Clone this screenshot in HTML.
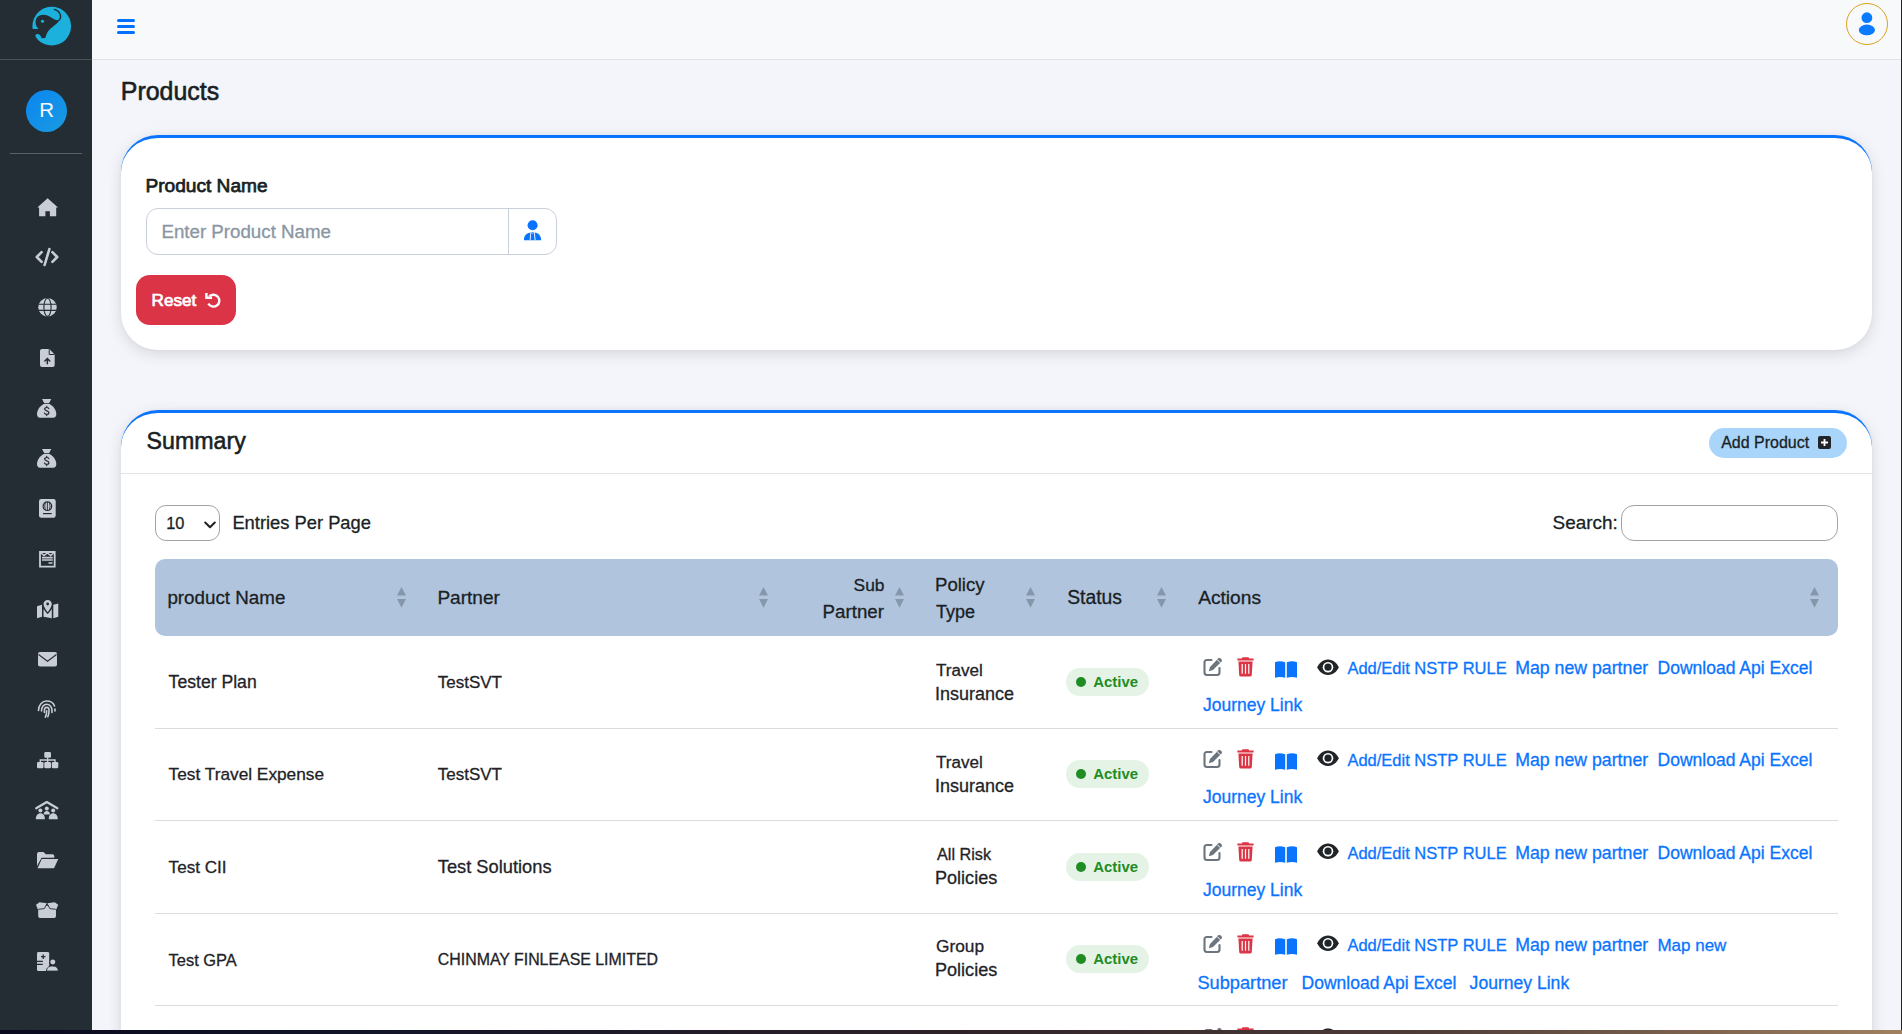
<!DOCTYPE html>
<html><head><meta charset="utf-8">
<style>
*{box-sizing:border-box;margin:0;padding:0}
html,body{width:1902px;height:1034px;overflow:hidden}
body{font-family:"Liberation Sans",sans-serif;background:#f4f5fa;color:#1f2328;position:relative}
.sb{position:absolute;left:0;top:0;width:92px;height:1030px;background:#232d33}
.sb .hr1{position:absolute;left:0;top:59px;width:92px;height:1px;background:#4a5258}
.sb .hr2{position:absolute;left:10px;top:153px;width:72px;height:1px;background:#5a6268}
.av{position:absolute;left:26px;top:90px;width:41px;height:42px;border-radius:50%;background:linear-gradient(135deg,#0b86f0,#1a9ae0);color:#f4f9ff;font-size:20.5px;text-align:center;line-height:40px;text-indent:0.5px}
.si{position:absolute;fill:#c9cdd6;overflow:visible}
.hd{position:absolute;left:92px;top:0;width:1810px;height:60px;background:#f8f9fb;border-bottom:1px solid #dfe1e6}
.rb{position:absolute;left:1901px;top:0;width:1px;height:1030px;background:#222}
.bb{position:absolute;left:0;top:1030px;width:1902px;height:4px;background:linear-gradient(90deg,#0a0a1e 0%,#121428 20%,#2e2228 50%,#4e3c38 75%,#a08060 100%)}
.card{position:absolute;left:121px;background:#fff;border-top:3px solid #0a74ff;border-radius:37px;box-shadow:0 4px 15px rgba(0,0,0,.12),0 0 4px rgba(0,0,0,.03)}
.ham{position:absolute;left:117px;top:18.9px;width:18px;height:15px}
.ham i{position:absolute;left:0;width:18px;height:2.9px;border-radius:1.5px;background:#0070ff}
.uc{position:absolute;left:1845.5px;top:2.5px;width:42.5px;height:42.5px;border-radius:50%;border:1.6px solid #d9a41e}
.ig{position:absolute;left:146px;top:208px;width:411px;height:47px;border:1px solid #c9d0d9;border-radius:12px;background:#fff}
.ig .dv{position:absolute;left:361px;top:0;width:1px;height:45px;background:#c9d0d9}
.rst{position:absolute;left:136px;top:275px;width:100px;height:50px;border-radius:14px;background:#db3446}
.t{position:absolute;white-space:nowrap;line-height:20px;-webkit-text-stroke:0.3px currentColor}
.ap{position:absolute;left:1709px;top:428px;width:138px;height:30px;border-radius:15px;background:#a9d5fb}
.dvd{position:absolute;left:121px;top:473px;width:1751px;height:1px;background:#e2e4e8}
.sel{position:absolute;left:155px;top:505px;width:65px;height:36px;border:1px solid #a3a3a3;border-radius:11px;background:#fff}
.srch{position:absolute;left:1621px;top:505px;width:217px;height:36px;border:1px solid #a3a3a3;border-radius:13px;background:#fff}
.th{position:absolute;left:155px;top:559px;width:1683px;height:77px;border-radius:10px;background:#b0c4de}
.srt{position:absolute;width:9px;height:21px}
.rl{position:absolute;left:155px;width:1683px;height:1.2px;background:#dcdcdc}
.bdg{position:absolute;left:1066px;width:83px;height:28px;border-radius:14px;background:#e5f3e7}
.bdg i{position:absolute;left:10px;top:9px;width:10px;height:10px;border-radius:50%;background:#1f8c24}
.ic{position:absolute}
</style></head>
<body>
<div class="sb">
  <svg style="position:absolute;left:26px;top:0" width="50" height="50" viewBox="0 0 1034 1034"><circle cx="532" cy="542" r="400" fill="#1cb0dd"/><path fill="#232d33" d="M262,600 C195,545 172,425 238,348 C320,272 440,300 530,368 C600,418 655,432 700,400 C660,495 530,560 462,640 C425,688 410,750 400,785 L322,790 C310,735 275,700 235,702 C200,705 185,735 195,765 L110,720 L120,600 Z"/><path d="M690,410 C750,330 700,225 585,195" fill="none" stroke="#232d33" stroke-width="28" stroke-linecap="round"/><circle cx="342" cy="440" r="33" fill="#1cb0dd"/></svg>
  <div class="hr1"></div>
  <div class="av">R</div>
  <div class="hr2"></div>

<svg class="si" style="left:36.6px;top:197.8px" width="21.3" height="18.5" viewBox="0 0 21.3 18.5"><path d="M0.3,9.6 L10.65,0.3 L21,9.6 L19.2,9.6 L19.2,18.3 L12.9,18.3 L12.9,13.2 L8.4,13.2 L8.4,18.3 L2.1,18.3 L2.1,9.6 Z"/></svg>
<svg class="si" style="left:35.3px;top:247.9px" width="24" height="18" viewBox="0 0 24 18"><path d="M6.6,4.2 L1.8,9 L6.6,13.8 M17.4,4.2 L22.2,9 L17.4,13.8 M14.4,1 L9.6,17" fill="none" stroke="#c9cdd6" stroke-width="2.6" stroke-linecap="round" stroke-linejoin="round"/></svg>
<svg class="si" style="left:37.8px;top:297.8px" width="19" height="18.6" viewBox="0 0 19 18.6"><circle cx="9.5" cy="9.3" r="9.2"/><path d="M0.5,6.3 H18.5 M0.5,12.4 H18.5" stroke="#232d33" stroke-width="1.1"/><ellipse cx="9.5" cy="9.3" rx="3.6" ry="9.1" fill="none" stroke="#232d33" stroke-width="1.1"/></svg>
<svg class="si" style="left:39.7px;top:349px" width="14.7" height="18" viewBox="0 0 14.7 18"><path d="M2,0 L9.3,0 L14.7,5.4 L14.7,16 Q14.7,18 12.7,18 L2,18 Q0,18 0,16 L0,2 Q0,0 2,0 Z"/><path d="M9.2,0.2 V5.5 H14.5" fill="none" stroke="#232d33" stroke-width="1"/><path d="M7.35,14.8 V9.6 M4.9,12 L7.35,9.5 L9.8,12" fill="none" stroke="#232d33" stroke-width="1.5" stroke-linecap="round" stroke-linejoin="round"/></svg>
<svg class="si" style="left:37.4px;top:398.8px" width="19.3" height="18.8" viewBox="0 0 19.3 18.8"><path d="M5,0 L14.3,0 L12,4.2 L7.3,4.2 Z"/><path d="M6.8,4.9 L12.5,4.9 C16,6.8 19.3,10.5 19.3,15 C19.3,17.4 18.2,18.8 16.2,18.8 L3.1,18.8 C1.1,18.8 0,17.4 0,15 C0,10.5 3.3,6.8 6.8,4.9 Z"/><path d="M11.8,9.6 C11.4,8.8 10.6,8.5 9.7,8.5 C8.5,8.5 7.6,9.1 7.6,10.1 C7.6,11.2 8.6,11.5 9.7,11.8 C10.9,12.1 11.9,12.5 11.9,13.7 C11.9,14.8 10.9,15.3 9.7,15.3 C8.7,15.3 7.8,14.9 7.4,14.1 M9.7,7.3 V8.5 M9.7,15.3 V16.6" fill="none" stroke="#232d33" stroke-width="1.2" stroke-linecap="round"/></svg>
<svg class="si" style="left:37.4px;top:448.8px" width="19.3" height="18.8" viewBox="0 0 19.3 18.8"><path d="M5,0 L14.3,0 L12,4.2 L7.3,4.2 Z"/><path d="M6.8,4.9 L12.5,4.9 C16,6.8 19.3,10.5 19.3,15 C19.3,17.4 18.2,18.8 16.2,18.8 L3.1,18.8 C1.1,18.8 0,17.4 0,15 C0,10.5 3.3,6.8 6.8,4.9 Z"/><path d="M11.8,9.6 C11.4,8.8 10.6,8.5 9.7,8.5 C8.5,8.5 7.6,9.1 7.6,10.1 C7.6,11.2 8.6,11.5 9.7,11.8 C10.9,12.1 11.9,12.5 11.9,13.7 C11.9,14.8 10.9,15.3 9.7,15.3 C8.7,15.3 7.8,14.9 7.4,14.1 M9.7,7.3 V8.5 M9.7,15.3 V16.6" fill="none" stroke="#232d33" stroke-width="1.2" stroke-linecap="round"/></svg>
<svg class="si" style="left:38.9px;top:498.8px" width="16.7" height="18.8" viewBox="0 0 16.7 18.8"><rect x="0" y="0" width="16.7" height="18.8" rx="2.2"/><circle cx="8.4" cy="7.2" r="4.3" fill="none" stroke="#232d33" stroke-width="1.2"/><path d="M8.4,2.9 V11.5 M6.3,3.4 Q5.2,7.2 6.3,11 M10.5,3.4 Q11.6,7.2 10.5,11" fill="none" stroke="#232d33" stroke-width="0.9"/><path d="M4,14.6 H12.7" stroke="#232d33" stroke-width="1.2"/></svg>
<svg class="si" style="left:38.9px;top:550.9px" width="16.7" height="16.7" viewBox="0 0 16.7 16.7"><path d="M1,1 H15.7 V15.7 H1 Z" fill="none" stroke="#c9cdd6" stroke-width="1.8"/><path d="M1.5,1.5 L5,4.5 L8.3,2 L11.7,4.5 L15.2,1.5" fill="none" stroke="#c9cdd6" stroke-width="1.5"/><path d="M3,6.6 H13.7 M3,9 H13.7 M9.5,12 H13.5" stroke="#c9cdd6" stroke-width="1.6"/></svg>
<svg class="si" style="left:36.6px;top:599.8px" width="21.3" height="18.2" viewBox="0 0 21.3 18.2"><path d="M0,6.2 L5,4.8 L5,16.8 L0,18.2 Z M16.3,4.8 L21.3,3.4 L21.3,16.8 L16.3,18.2 Z M6.5,9 L9.5,13 L10.65,14 L11.8,13 L14.8,9 L14.8,18.2 L6.5,16.8 Z"/><path d="M10.65,0 C13,0 14.8,1.8 14.8,4 C14.8,7 10.65,12.3 10.65,12.3 C10.65,12.3 6.5,7 6.5,4 C6.5,1.8 8.3,0 10.65,0 Z"/><circle cx="10.65" cy="4" r="1.4" fill="#232d33"/></svg>
<svg class="si" style="left:37.8px;top:652px" width="19" height="14.4" viewBox="0 0 19 14.4"><rect x="0" y="0" width="19" height="14.4" rx="2"/><path d="M0.5,2.5 L9.5,9.3 L18.5,2.5" fill="none" stroke="#232d33" stroke-width="1.1"/></svg>
<svg class="si" style="left:37.4px;top:699.8px" width="19.3" height="18.2" viewBox="0 0 19.3 18.2"><g fill="none" stroke="#c9cdd6" stroke-width="1.6" stroke-linecap="round"><path d="M1.5,10.5 C1.5,5 5.2,1 9.7,1 C13.5,1 16.5,3.2 17.5,6"/><path d="M18,9 V11"/><path d="M4.5,11 C4.5,7 6.8,4.2 9.7,4.2 C12.5,4.2 15,6.8 15,10.5 V12.5"/><path d="M7.4,12.5 V10.5 C7.4,8.8 8.4,7.4 9.7,7.4 C11.2,7.4 12.1,8.6 12.1,10.5 C12.1,13 11.6,15 10.8,16.8"/><path d="M9.7,10.8 C9.7,13.5 9.3,15.8 8.3,17.2"/></g></svg>
<svg class="si" style="left:36.6px;top:752px" width="21.3" height="16.3" viewBox="0 0 21.3 16.3"><rect x="7.3" y="0" width="6.7" height="5.8" rx="1.3"/><path d="M10.65,5.5 V10.2 M3.3,10.2 V8 H18 V10.2" fill="none" stroke="#c9cdd6" stroke-width="1.4"/><rect x="0" y="10" width="6.5" height="6.3" rx="1.3"/><rect x="7.3" y="10" width="6.7" height="6.3" rx="1.3"/><rect x="14.8" y="10" width="6.5" height="6.3" rx="1.3"/></svg>
<svg class="si" style="left:35.4px;top:800.9px" width="23.6" height="18.2" viewBox="0 0 23.6 18.2"><path d="M1.2,7.3 L11.8,1 L22.4,7.3" fill="none" stroke="#c9cdd6" stroke-width="2.2" stroke-linecap="round" stroke-linejoin="round"/><circle cx="11.8" cy="7.5" r="2"/><circle cx="5.4" cy="9.6" r="2"/><circle cx="18.2" cy="9.6" r="2"/><path d="M8.6,13.5 C8.6,11.2 10,10 11.8,10 C13.6,10 15,11.2 15,13.5 Z"/><path d="M0.8,18.2 C0.8,14.5 2.8,12.3 5.4,12.3 C7.6,12.3 9.4,14.2 9.8,16.5 L9.8,18.2 Z"/><path d="M13.8,18.2 L13.8,16.5 C14.2,14.2 16,12.3 18.2,12.3 C20.8,12.3 22.8,14.5 22.8,18.2 Z"/></svg>
<svg class="si" style="left:36.6px;top:852px" width="21.3" height="16.3" viewBox="0 0 21.3 16.3"><path d="M0,2 Q0,0 2,0 L6.5,0 L8.8,2.2 L15.5,2.2 Q17.3,2.2 17.3,4 L17.3,5.8 L4.6,5.8 L0,14 Z"/><path d="M4.8,7 L21.3,7 L17,16.3 L0.5,16.3 Z"/></svg>
<svg class="si" style="left:36.1px;top:902px" width="22.2" height="16.1" viewBox="0 0 22.2 16.1"><path d="M2.2,7.5 L11.1,3.5 L20,7.5 L20,13.5 Q20,16.1 17.5,16.1 L4.7,16.1 Q2.2,16.1 2.2,13.5 Z"/><path d="M0,2.8 L3.5,0.3 L11.1,1.2 L8.3,6.6 L1.8,7.2 Z"/><path d="M22.2,2.8 L18.7,0.3 L11.1,1.2 L13.9,6.6 L20.4,7.2 Z"/><path d="M2.5,7.3 L8.3,6.6 L11.1,1.5 L13.9,6.6 L19.7,7.3" fill="none" stroke="#232d33" stroke-width="0.9"/></svg>
<svg class="si" style="left:36.5px;top:951.6px" width="21.3" height="19.1" viewBox="0 0 21.3 19.1"><rect x="0" y="0" width="12.2" height="19.1" rx="1.5"/><path d="M6.2,2.5 V7 M4,4.7 H8.4" stroke="#232d33" stroke-width="1.3"/><path d="M0,9.3 H5.8 M0,12.3 H5.8" stroke="#232d33" stroke-width="1.2"/><circle cx="15.8" cy="10" r="3.3" fill="#232d33"/><circle cx="15.8" cy="10" r="2.5"/><path d="M9.5,19.1 C9.5,15.5 12,14 15.8,14 C19.4,14 21.3,15.8 21.3,19.1 Z" stroke="#232d33" stroke-width="0.9"/></svg>
</div>
<div class="hd"></div>
<div class="ham"><i style="top:0"></i><i style="top:6.1px"></i><i style="top:12.2px"></i></div>
<div class="uc"></div>
<svg style="position:absolute;left:1855px;top:10px" width="24" height="28" viewBox="0 0 24 28"><circle cx="11.9" cy="7.7" r="5.4" fill="#0a7bff"/><ellipse cx="11.9" cy="19.9" rx="8.1" ry="5.3" fill="#0a7bff"/></svg>
<div class="card" style="top:135px;width:1751px;height:215px"></div>
<div class="ig"><div class="dv"></div><svg style="position:absolute;left:377px;top:11px" width="18" height="21" viewBox="0 0 18 21"><circle cx="8.6" cy="5.3" r="5.05" fill="#0a74ff"/><path d="M-0.3,20.3 C-0.3,15.6 2.8,12.6 6.8,12.4 L10.4,12.4 C14.4,12.6 17.2,15.6 17.2,20.3 Z" fill="#0a74ff"/><path d="M6.9,12.3 L6.1,20 M10.3,12.3 L11.1,20" stroke="#fff" stroke-width="0.9"/><path d="M7.4,11.9 H9.8 L9.4,13.4 H7.8 Z" fill="#fff"/><path d="M7.5,12.2 H9.7 L9.3,13.2 H7.9 Z" fill="#0a74ff"/></svg></div>
<div class="rst"><svg style="position:absolute;left:69px;top:17.5px" width="16" height="16" viewBox="0 0 16 16"><path d="M3.3,10.7 A5.95,5.95 0 1 0 4.3,3.4" fill="none" stroke="#fff" stroke-width="2.3"/><path d="M0.2,-0.1 L2.6,-0.1 L2.6,3.6 L7.1,3.6 L7.1,6 L0.2,6 Z" fill="#fff"/></svg></div>
<div class="card" style="top:409.5px;width:1751px;height:700px"></div>
<div class="ap"><svg style="position:absolute;left:109px;top:8px" width="13" height="13" viewBox="0 0 13 13"><rect width="13" height="13" rx="2" fill="#212529"/><path d="M6.5,3 V10 M3,6.5 H10" stroke="#fff" stroke-width="1.8"/></svg></div>
<div class="dvd"></div>
<div class="sel"><svg style="position:absolute;left:47.5px;top:14.5px" width="12" height="8" viewBox="0 0 12 8"><path d="M1.2,1.5 L6,6.2 L10.8,1.5" fill="none" stroke="#222" stroke-width="2" stroke-linecap="round" stroke-linejoin="round"/></svg></div>
<div class="srch"></div>
<div class="th"></div>
<div class="srt" style="left:396.75px;top:587px"><svg width="9" height="21" viewBox="0 0 9 21"><path d="M4.5,0 L9,8.6 L0,8.6 Z M0,12 L9,12 L4.5,20.7 Z" fill="#8797ab"/></svg></div>
<div class="srt" style="left:758.80px;top:587px"><svg width="9" height="21" viewBox="0 0 9 21"><path d="M4.5,0 L9,8.6 L0,8.6 Z M0,12 L9,12 L4.5,20.7 Z" fill="#8797ab"/></svg></div>
<div class="srt" style="left:894.90px;top:587px"><svg width="9" height="21" viewBox="0 0 9 21"><path d="M4.5,0 L9,8.6 L0,8.6 Z M0,12 L9,12 L4.5,20.7 Z" fill="#8797ab"/></svg></div>
<div class="srt" style="left:1025.90px;top:587px"><svg width="9" height="21" viewBox="0 0 9 21"><path d="M4.5,0 L9,8.6 L0,8.6 Z M0,12 L9,12 L4.5,20.7 Z" fill="#8797ab"/></svg></div>
<div class="srt" style="left:1157.00px;top:587px"><svg width="9" height="21" viewBox="0 0 9 21"><path d="M4.5,0 L9,8.6 L0,8.6 Z M0,12 L9,12 L4.5,20.7 Z" fill="#8797ab"/></svg></div>
<div class="srt" style="left:1809.50px;top:587px"><svg width="9" height="21" viewBox="0 0 9 21"><path d="M4.5,0 L9,8.6 L0,8.6 Z M0,12 L9,12 L4.5,20.7 Z" fill="#8797ab"/></svg></div>
<div class="rl" style="top:727.8px"></div>
<div class="ic" style="left:1203px;top:657.2px"><svg width="20" height="20" viewBox="0 0 20 20"><path d="M8.5,3 H4 Q1.5,3 1.5,5.5 V15.5 Q1.5,18 4,18 H14 Q16.5,18 16.5,15.5 V11" fill="none" stroke="#6c757d" stroke-width="2.1" stroke-linecap="round"/><path d="M15.4,1.2 Q16.3,0.4 17.2,1.2 L18.6,2.6 Q19.4,3.5 18.6,4.4 L10,13 L5.8,14.2 L7,10 Z" fill="#6c757d"/><path d="M14.2,2.6 L17.4,5.8" stroke="#fff" stroke-width="1"/></svg></div>
<div class="ic" style="left:1237px;top:657.2px"><svg width="17" height="20" viewBox="0 0 17 20"><path d="M5.5,0.3 H11.5 L12.2,1.6 H16.6 V3.4 H0.4 V1.6 H4.8 Z" fill="#dc3545"/><path d="M1.4,4.6 H15.6 L14.8,18 Q14.7,19.6 13,19.6 H4 Q2.3,19.6 2.2,18 Z" fill="#dc3545"/><path d="M5.2,7 V16.8 M8.5,7 V16.8 M11.8,7 V16.8" stroke="#fff" stroke-width="1.2"/></svg></div>
<div class="ic" style="left:1275px;top:661.0px"><svg width="22" height="17" viewBox="0 0 22 17"><path d="M0,1.2 Q4.5,-0.6 10.2,1.2 V16.8 Q5,15 0,16.8 Z M11.8,1.2 Q17.5,-0.6 22,1.2 V16.8 Q17,15 11.8,16.8 Z" fill="#0a74ff"/></svg></div>
<div class="ic" style="left:1317px;top:658.5px"><svg width="22" height="17" viewBox="0 0 22 17"><path d="M11,0.5 C5.5,0.5 1.8,4.5 0.3,8.2 C1.8,12 5.5,16 11,16 C16.5,16 20.2,12 21.7,8.2 C20.2,4.5 16.5,0.5 11,0.5 Z" fill="#212529"/><circle cx="11" cy="8.2" r="5.3" fill="#fff"/><circle cx="11" cy="8.2" r="3.6" fill="#212529"/><path d="M9.2,5.6 A3,3 0 0 0 8.4,9.2 L11,8.2 Z" fill="#fff" opacity="0"/></svg></div>
<div class="bdg" style="top:668.0px"><i></i></div>
<div class="rl" style="top:819.7px"></div>
<div class="ic" style="left:1203px;top:749.0px"><svg width="20" height="20" viewBox="0 0 20 20"><path d="M8.5,3 H4 Q1.5,3 1.5,5.5 V15.5 Q1.5,18 4,18 H14 Q16.5,18 16.5,15.5 V11" fill="none" stroke="#6c757d" stroke-width="2.1" stroke-linecap="round"/><path d="M15.4,1.2 Q16.3,0.4 17.2,1.2 L18.6,2.6 Q19.4,3.5 18.6,4.4 L10,13 L5.8,14.2 L7,10 Z" fill="#6c757d"/><path d="M14.2,2.6 L17.4,5.8" stroke="#fff" stroke-width="1"/></svg></div>
<div class="ic" style="left:1237px;top:749.0px"><svg width="17" height="20" viewBox="0 0 17 20"><path d="M5.5,0.3 H11.5 L12.2,1.6 H16.6 V3.4 H0.4 V1.6 H4.8 Z" fill="#dc3545"/><path d="M1.4,4.6 H15.6 L14.8,18 Q14.7,19.6 13,19.6 H4 Q2.3,19.6 2.2,18 Z" fill="#dc3545"/><path d="M5.2,7 V16.8 M8.5,7 V16.8 M11.8,7 V16.8" stroke="#fff" stroke-width="1.2"/></svg></div>
<div class="ic" style="left:1275px;top:752.8px"><svg width="22" height="17" viewBox="0 0 22 17"><path d="M0,1.2 Q4.5,-0.6 10.2,1.2 V16.8 Q5,15 0,16.8 Z M11.8,1.2 Q17.5,-0.6 22,1.2 V16.8 Q17,15 11.8,16.8 Z" fill="#0a74ff"/></svg></div>
<div class="ic" style="left:1317px;top:750.3px"><svg width="22" height="17" viewBox="0 0 22 17"><path d="M11,0.5 C5.5,0.5 1.8,4.5 0.3,8.2 C1.8,12 5.5,16 11,16 C16.5,16 20.2,12 21.7,8.2 C20.2,4.5 16.5,0.5 11,0.5 Z" fill="#212529"/><circle cx="11" cy="8.2" r="5.3" fill="#fff"/><circle cx="11" cy="8.2" r="3.6" fill="#212529"/><path d="M9.2,5.6 A3,3 0 0 0 8.4,9.2 L11,8.2 Z" fill="#fff" opacity="0"/></svg></div>
<div class="bdg" style="top:759.8px"><i></i></div>
<div class="rl" style="top:912.7px"></div>
<div class="ic" style="left:1203px;top:842.1px"><svg width="20" height="20" viewBox="0 0 20 20"><path d="M8.5,3 H4 Q1.5,3 1.5,5.5 V15.5 Q1.5,18 4,18 H14 Q16.5,18 16.5,15.5 V11" fill="none" stroke="#6c757d" stroke-width="2.1" stroke-linecap="round"/><path d="M15.4,1.2 Q16.3,0.4 17.2,1.2 L18.6,2.6 Q19.4,3.5 18.6,4.4 L10,13 L5.8,14.2 L7,10 Z" fill="#6c757d"/><path d="M14.2,2.6 L17.4,5.8" stroke="#fff" stroke-width="1"/></svg></div>
<div class="ic" style="left:1237px;top:842.1px"><svg width="17" height="20" viewBox="0 0 17 20"><path d="M5.5,0.3 H11.5 L12.2,1.6 H16.6 V3.4 H0.4 V1.6 H4.8 Z" fill="#dc3545"/><path d="M1.4,4.6 H15.6 L14.8,18 Q14.7,19.6 13,19.6 H4 Q2.3,19.6 2.2,18 Z" fill="#dc3545"/><path d="M5.2,7 V16.8 M8.5,7 V16.8 M11.8,7 V16.8" stroke="#fff" stroke-width="1.2"/></svg></div>
<div class="ic" style="left:1275px;top:845.9px"><svg width="22" height="17" viewBox="0 0 22 17"><path d="M0,1.2 Q4.5,-0.6 10.2,1.2 V16.8 Q5,15 0,16.8 Z M11.8,1.2 Q17.5,-0.6 22,1.2 V16.8 Q17,15 11.8,16.8 Z" fill="#0a74ff"/></svg></div>
<div class="ic" style="left:1317px;top:843.4px"><svg width="22" height="17" viewBox="0 0 22 17"><path d="M11,0.5 C5.5,0.5 1.8,4.5 0.3,8.2 C1.8,12 5.5,16 11,16 C16.5,16 20.2,12 21.7,8.2 C20.2,4.5 16.5,0.5 11,0.5 Z" fill="#212529"/><circle cx="11" cy="8.2" r="5.3" fill="#fff"/><circle cx="11" cy="8.2" r="3.6" fill="#212529"/><path d="M9.2,5.6 A3,3 0 0 0 8.4,9.2 L11,8.2 Z" fill="#fff" opacity="0"/></svg></div>
<div class="bdg" style="top:852.9px"><i></i></div>
<div class="rl" style="top:1005.0px"></div>
<div class="ic" style="left:1203px;top:934.0px"><svg width="20" height="20" viewBox="0 0 20 20"><path d="M8.5,3 H4 Q1.5,3 1.5,5.5 V15.5 Q1.5,18 4,18 H14 Q16.5,18 16.5,15.5 V11" fill="none" stroke="#6c757d" stroke-width="2.1" stroke-linecap="round"/><path d="M15.4,1.2 Q16.3,0.4 17.2,1.2 L18.6,2.6 Q19.4,3.5 18.6,4.4 L10,13 L5.8,14.2 L7,10 Z" fill="#6c757d"/><path d="M14.2,2.6 L17.4,5.8" stroke="#fff" stroke-width="1"/></svg></div>
<div class="ic" style="left:1237px;top:934.0px"><svg width="17" height="20" viewBox="0 0 17 20"><path d="M5.5,0.3 H11.5 L12.2,1.6 H16.6 V3.4 H0.4 V1.6 H4.8 Z" fill="#dc3545"/><path d="M1.4,4.6 H15.6 L14.8,18 Q14.7,19.6 13,19.6 H4 Q2.3,19.6 2.2,18 Z" fill="#dc3545"/><path d="M5.2,7 V16.8 M8.5,7 V16.8 M11.8,7 V16.8" stroke="#fff" stroke-width="1.2"/></svg></div>
<div class="ic" style="left:1275px;top:937.8px"><svg width="22" height="17" viewBox="0 0 22 17"><path d="M0,1.2 Q4.5,-0.6 10.2,1.2 V16.8 Q5,15 0,16.8 Z M11.8,1.2 Q17.5,-0.6 22,1.2 V16.8 Q17,15 11.8,16.8 Z" fill="#0a74ff"/></svg></div>
<div class="ic" style="left:1317px;top:935.3px"><svg width="22" height="17" viewBox="0 0 22 17"><path d="M11,0.5 C5.5,0.5 1.8,4.5 0.3,8.2 C1.8,12 5.5,16 11,16 C16.5,16 20.2,12 21.7,8.2 C20.2,4.5 16.5,0.5 11,0.5 Z" fill="#212529"/><circle cx="11" cy="8.2" r="5.3" fill="#fff"/><circle cx="11" cy="8.2" r="3.6" fill="#212529"/><path d="M9.2,5.6 A3,3 0 0 0 8.4,9.2 L11,8.2 Z" fill="#fff" opacity="0"/></svg></div>
<div class="bdg" style="top:944.8px"><i></i></div>
<div class="ic" style="left:1203px;top:1026.5px"><svg width="20" height="20" viewBox="0 0 20 20"><path d="M8.5,3 H4 Q1.5,3 1.5,5.5 V15.5 Q1.5,18 4,18 H14 Q16.5,18 16.5,15.5 V11" fill="none" stroke="#6c757d" stroke-width="2.1" stroke-linecap="round"/><path d="M15.4,1.2 Q16.3,0.4 17.2,1.2 L18.6,2.6 Q19.4,3.5 18.6,4.4 L10,13 L5.8,14.2 L7,10 Z" fill="#6c757d"/><path d="M14.2,2.6 L17.4,5.8" stroke="#fff" stroke-width="1"/></svg></div>
<div class="ic" style="left:1237px;top:1026.5px"><svg width="17" height="20" viewBox="0 0 17 20"><path d="M5.5,0.3 H11.5 L12.2,1.6 H16.6 V3.4 H0.4 V1.6 H4.8 Z" fill="#dc3545"/><path d="M1.4,4.6 H15.6 L14.8,18 Q14.7,19.6 13,19.6 H4 Q2.3,19.6 2.2,18 Z" fill="#dc3545"/><path d="M5.2,7 V16.8 M8.5,7 V16.8 M11.8,7 V16.8" stroke="#fff" stroke-width="1.2"/></svg></div>
<div class="ic" style="left:1317px;top:1027.8px"><svg width="22" height="17" viewBox="0 0 22 17"><path d="M11,0.5 C5.5,0.5 1.8,4.5 0.3,8.2 C1.8,12 5.5,16 11,16 C16.5,16 20.2,12 21.7,8.2 C20.2,4.5 16.5,0.5 11,0.5 Z" fill="#212529"/><circle cx="11" cy="8.2" r="5.3" fill="#fff"/><circle cx="11" cy="8.2" r="3.6" fill="#212529"/><path d="M9.2,5.6 A3,3 0 0 0 8.4,9.2 L11,8.2 Z" fill="#fff" opacity="0"/></svg></div>
<div class="t" style="left:120.80px;top:81.11px;font-size:24.92px;color:#1a1f24;-webkit-text-stroke:0.6px currentColor">Products</div>
<div class="t" style="left:145.40px;top:176.00px;font-size:19.14px;color:#1a1f24;-webkit-text-stroke:0.75px currentColor">Product Name</div>
<div class="t" style="left:161.40px;top:221.71px;font-size:18.73px;color:#8a96a3">Enter Product Name</div>
<div class="t" style="left:151.60px;top:290.00px;font-size:17.14px;color:#fff;-webkit-text-stroke:0.7px currentColor">Reset</div>
<div class="t" style="left:146.60px;top:431.11px;font-size:23.18px;color:#1a1f24;-webkit-text-stroke:0.55px currentColor">Summary</div>
<div class="t" style="left:1721.20px;top:432.80px;font-size:15.97px;color:#1a1f24">Add Product</div>
<div class="t" style="left:166.20px;top:512.71px;font-size:16.40px;color:#1a1f24">10</div>
<div class="t" style="left:232.40px;top:513.41px;font-size:18.34px;color:#1a1f24">Entries Per Page</div>
<div class="t" style="left:1552.60px;top:512.75px;font-size:18.94px;color:#1a1f24">Search:</div>
<div class="t" style="left:167.40px;top:587.71px;font-size:18.80px;color:#1a1f24">product Name</div>
<div class="t" style="left:437.40px;top:587.91px;font-size:19.05px;color:#1a1f24">Partner</div>
<div class="t" style="left:853.60px;top:574.71px;font-size:17.36px;color:#1a1f24">Sub</div>
<div class="t" style="left:822.60px;top:601.71px;font-size:18.73px;color:#1a1f24">Partner</div>
<div class="t" style="left:935.00px;top:574.71px;font-size:18.60px;color:#1a1f24">Policy</div>
<div class="t" style="left:936.00px;top:601.71px;font-size:18.00px;color:#1a1f24">Type</div>
<div class="t" style="left:1067.20px;top:587.00px;font-size:19.34px;color:#1a1f24">Status</div>
<div class="t" style="left:1198.20px;top:588.00px;font-size:19.17px;color:#1a1f24">Actions</div>
<div class="t" style="left:168.60px;top:671.91px;font-size:17.61px;color:#1f2328">Tester Plan</div>
<div class="t" style="left:437.80px;top:672.91px;font-size:16.99px;color:#1f2328">TestSVT</div>
<div class="t" style="left:936.00px;top:660.91px;font-size:17.08px;color:#1f2328">Travel</div>
<div class="t" style="left:935.00px;top:683.91px;font-size:17.99px;color:#1f2328">Insurance</div>
<div class="t" style="left:1093.20px;top:672.00px;font-size:14.94px;color:#1f8c24;font-weight:bold;-webkit-text-stroke:0">Active</div>
<div class="t" style="left:1347.40px;top:658.21px;font-size:16.50px;color:#0a74ff">Add/Edit NSTP RULE</div>
<div class="t" style="left:1515.20px;top:658.21px;font-size:17.73px;color:#0a74ff">Map new partner</div>
<div class="t" style="left:1657.60px;top:658.21px;font-size:17.51px;color:#0a74ff">Download Api Excel</div>
<div class="t" style="left:1203.00px;top:695.00px;font-size:17.50px;color:#0a74ff">Journey Link</div>
<div class="t" style="left:168.60px;top:763.71px;font-size:17.27px;color:#1f2328">Test Travel Expense</div>
<div class="t" style="left:437.80px;top:764.71px;font-size:16.99px;color:#1f2328">TestSVT</div>
<div class="t" style="left:936.00px;top:752.71px;font-size:17.08px;color:#1f2328">Travel</div>
<div class="t" style="left:935.00px;top:775.71px;font-size:17.99px;color:#1f2328">Insurance</div>
<div class="t" style="left:1093.20px;top:763.80px;font-size:14.94px;color:#1f8c24;font-weight:bold;-webkit-text-stroke:0">Active</div>
<div class="t" style="left:1347.40px;top:750.01px;font-size:16.50px;color:#0a74ff">Add/Edit NSTP RULE</div>
<div class="t" style="left:1515.20px;top:750.01px;font-size:17.73px;color:#0a74ff">Map new partner</div>
<div class="t" style="left:1657.60px;top:750.01px;font-size:17.51px;color:#0a74ff">Download Api Excel</div>
<div class="t" style="left:1203.00px;top:786.80px;font-size:17.50px;color:#0a74ff">Journey Link</div>
<div class="t" style="left:168.60px;top:858.00px;font-size:17.08px;color:#1f2328">Test CII</div>
<div class="t" style="left:437.80px;top:857.00px;font-size:18.28px;color:#1f2328">Test Solutions</div>
<div class="t" style="left:937.00px;top:844.00px;font-size:16.23px;color:#1f2328">All Risk</div>
<div class="t" style="left:935.00px;top:868.00px;font-size:18.07px;color:#1f2328">Policies</div>
<div class="t" style="left:1093.20px;top:856.91px;font-size:14.94px;color:#1f8c24;font-weight:bold;-webkit-text-stroke:0">Active</div>
<div class="t" style="left:1347.40px;top:843.10px;font-size:16.50px;color:#0a74ff">Add/Edit NSTP RULE</div>
<div class="t" style="left:1515.20px;top:843.10px;font-size:17.73px;color:#0a74ff">Map new partner</div>
<div class="t" style="left:1657.60px;top:843.10px;font-size:17.51px;color:#0a74ff">Download Api Excel</div>
<div class="t" style="left:1203.00px;top:879.91px;font-size:17.50px;color:#0a74ff">Journey Link</div>
<div class="t" style="left:168.60px;top:949.61px;font-size:16.45px;color:#1f2328">Test GPA</div>
<div class="t" style="left:437.80px;top:949.61px;font-size:15.90px;color:#1f2328">CHINMAY FINLEASE LIMITED</div>
<div class="t" style="left:936.00px;top:936.21px;font-size:17.30px;color:#1f2328">Group</div>
<div class="t" style="left:935.00px;top:960.21px;font-size:18.07px;color:#1f2328">Policies</div>
<div class="t" style="left:1093.20px;top:948.80px;font-size:14.94px;color:#1f8c24;font-weight:bold;-webkit-text-stroke:0">Active</div>
<div class="t" style="left:1347.40px;top:935.01px;font-size:16.50px;color:#0a74ff">Add/Edit NSTP RULE</div>
<div class="t" style="left:1515.20px;top:935.01px;font-size:17.73px;color:#0a74ff">Map new partner</div>
<div class="t" style="left:1657.40px;top:936.01px;font-size:17.01px;color:#0a74ff">Map new</div>
<div class="t" style="left:1197.40px;top:972.80px;font-size:18.23px;color:#0a74ff">Subpartner</div>
<div class="t" style="left:1301.60px;top:972.80px;font-size:17.51px;color:#0a74ff">Download Api Excel</div>
<div class="t" style="left:1469.60px;top:972.80px;font-size:17.57px;color:#0a74ff">Journey Link</div>
<div class="rb"></div>
<div class="bb"></div>
</body></html>
